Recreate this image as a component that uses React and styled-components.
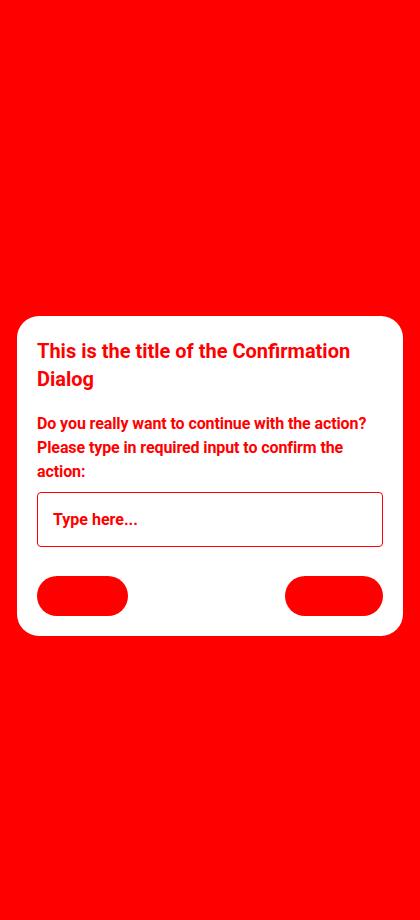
import React, { useState } from "react";
import styled, { createGlobalStyle } from "styled-components";

const GlobalStyle = createGlobalStyle`
  html, body {
    margin: 0;
    padding: 0;
    background: #ff0000;
  }
  body {
    font-family: Roboto, "Noto Sans", sans-serif;
  }
`;

const Page = styled.div`
  position: relative;
  width: 420px;
  height: 920px;
  background: #ff0000;
  overflow: hidden;
`;

const Backdrop = styled.div`
  display: flex;
  flex-direction: column;
  padding: 32px 30px 0 30px;
  color: #ff0000;
`;

const PageTitle = styled.h1`
  margin: 0;
  font-size: 22px;
  line-height: 30px;
  font-weight: 400;
`;

const PageText = styled.p`
  margin: 12px 0 0;
  font-size: 18px;
  line-height: 34px;
  font-weight: 400;
`;

const PageLabel = styled.div`
  margin: ${(p) => p.gap}px 0 0;
  font-size: 16px;
  line-height: 22px;
`;

const Overlay = styled.div`
  position: absolute;
  inset: 0;
  display: flex;
  flex-direction: column;
  padding: 316px 17px 0;
`;

const Dialog = styled.div`
  background: #ffffff;
  border-radius: 22px;
  padding: 21px 20px 20px;
  display: flex;
  flex-direction: column;
`;

const Title = styled.h2`
  margin: 0;
  color: #ff0000;
  font-size: 20px;
  line-height: 28px;
  font-weight: 700;
`;

const Message = styled.p`
  margin: 19px 0 0;
  color: #ff0000;
  font-size: 16px;
  line-height: 24px;
  font-weight: 700;
  letter-spacing: -0.1px;
`;

const Field = styled.input`
  margin-top: 8px;
  height: 55px;
  box-sizing: border-box;
  border: 1px solid #ff0000;
  border-radius: 4px;
  padding: 0 15px;
  font-family: Roboto, "Noto Sans", sans-serif;
  font-size: 16px;
  font-weight: 700;
  color: #ff0000;
  outline: none;
  background: #ffffff;
  &::placeholder {
    color: #ff0000;
    opacity: 1;
  }
`;

const Actions = styled.div`
  display: flex;
  justify-content: space-between;
  margin-top: 29px;
`;

const Button = styled.button`
  height: 40px;
  width: ${(p) => p.w}px;
  border: none;
  border-radius: 20px;
  background: #ff0000;
  color: ${(p) => p.text};
  font-family: Roboto, "Noto Sans", sans-serif;
  font-size: 14px;
  font-weight: 400;
  cursor: pointer;
`;

export default function App() {
  const [value, setValue] = useState("");

  return (
    <Page>
      <GlobalStyle />
      <Backdrop>
        <PageTitle>This is the title of the Confirmation Dialog</PageTitle>
        <PageText>
          Do you really want to continue with the action? Please type in
        </PageText>
        <PageLabel gap={10}>Type here</PageLabel>
        <PageLabel gap={50}>Cancel confirm button</PageLabel>
      </Backdrop>
      <Overlay>
        <Dialog>
          <Title>This is the title of the Confirmation Dialog</Title>
          <Message>
            Do you really want to continue with the action? Please type in
            required input to confirm the action:
          </Message>
          <Field
            placeholder="Type here..."
            value={value}
            onChange={(e) => setValue(e.target.value)}
          />
          <Actions>
            <Button w={91} text="#ff0000">
              Cancel
            </Button>
            <Button w={98} text="#ff0000">
              Confirm
            </Button>
          </Actions>
        </Dialog>
      </Overlay>
    </Page>
  );
}
